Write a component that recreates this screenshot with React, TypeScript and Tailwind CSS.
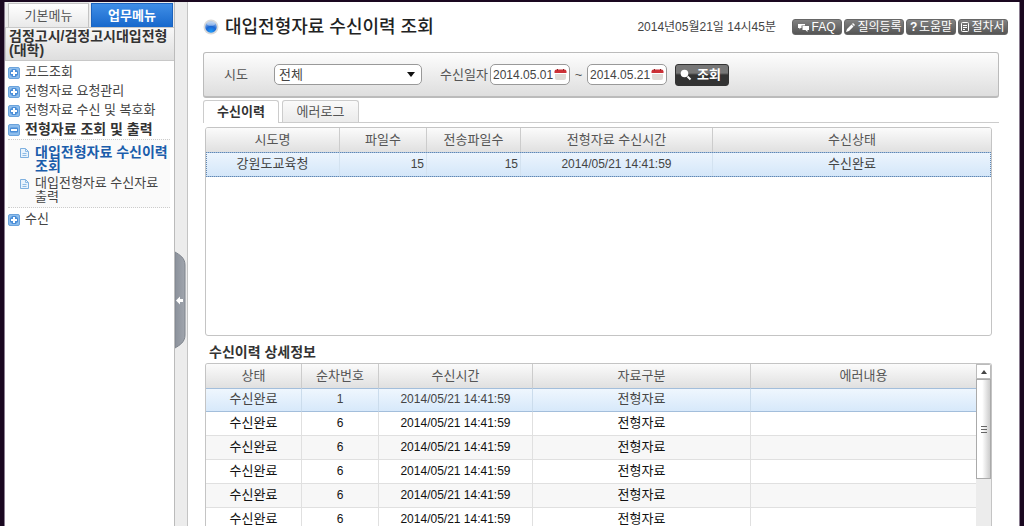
import React from "react";

const fonts = "[font-family:'Liberation_Sans','Noto_Sans_CJK_KR',sans-serif]";

type Row = { status: string; seq: number; time: string; kind: string; error: string };

const detailRows: Row[] = [1, 6, 6, 6, 6, 6].map((seq) => ({
  status: "수신완료",
  seq,
  time: "2014/05/21 14:41:59",
  kind: "전형자료",
  error: "",
}));

function TreeIcon({ open = false }: { open?: boolean }) {
  return (
    <svg viewBox="0 0 12 12" className="h-3 w-3 shrink-0" aria-hidden="true">
      <rect x="0.5" y="0.5" width="11" height="11" rx="1.5" fill="#8ebdec" stroke="#6ba3dc" />
      <rect x="2" y="3.500" width="8" height="5" rx="1" fill="#4a8ed8" />
      {!open && <rect x="3.500" y="2" width="5" height="8" rx="1" fill="#4a8ed8" />}
      <path d={open ? "M3 6h6" : "M3 6h6M6 3v6"} stroke="#fff" strokeWidth="2" />
    </svg>
  );
}

function PageIcon() {
  return (
    <svg viewBox="0 0 9 10" className="mt-[3px] h-[10px] w-[9px] shrink-0" aria-hidden="true">
      <path d="M0.5 0.5h5l3 3v6h-8z" fill="#e9f3fc" stroke="#7fb0df" />
      <path d="M5.5 0.5v3h3M2.5 5.5h4M2.5 7.5h4" fill="none" stroke="#8dbbe6" />
    </svg>
  );
}

function TreeItem({ label, open = false }: { label: string; open?: boolean }) {
  return (
    <a
      href="#"
      aria-expanded={open}
      className={
        open
          ? "flex h-[19px] items-center gap-[5px] pl-[3px] text-[14px] font-bold text-[#333]"
          : "flex h-[19px] items-center gap-[5px] pl-[3px] text-[13px] text-[#444]"
      }
    >
      <TreeIcon open={open} />
      <span className="pb-px whitespace-nowrap">{label}</span>
    </a>
  );
}

function Sidebar() {
  return (
    <aside className="flex w-[170px] shrink-0 flex-col border-r border-[#bbb] bg-white">
      <div className="flex h-[25px] gap-[2px] bg-[#ececec] pt-px pl-[3px] text-[13px]">
        <button className="w-[81px] border border-b-0 border-[#c4c4c4] bg-linear-to-b from-white to-[#e9e9e9] text-[#555]">
          기본메뉴
        </button>
        <button className="w-[82px] border border-b-0 border-[#1c63bd] bg-linear-to-b from-[#3f8ee6] to-[#1668cc] font-bold text-white">
          업무메뉴
        </button>
      </div>
      <h2 className="flex h-[34px] items-start border border-r-0 border-[#c8c8c8] bg-linear-to-b from-[#f8f8f8] to-[#dedede] pt-px pl-[3px] text-[14px] leading-[14px] font-bold text-[#333]">
        <span className="whitespace-nowrap">
          검정고시/검정고시대입전형
          <br />
          (대학)
        </span>
      </h2>
      <nav className="pt-[2px]" aria-label="업무메뉴">
        <TreeItem label="코드조회" />
        <TreeItem label="전형자료 요청관리" />
        <TreeItem label="전형자료 수신 및 복호화" />
        <TreeItem label="전형자료 조회 및 출력" open />
        <ul className="mr-1 mb-[2px] ml-[3px] flex flex-col gap-[3px] border-y border-dotted border-[#ccc] bg-[#fafafa] pt-[5px] pb-[3px] text-[#444]">
          <li>
            <a href="#" className="flex gap-[6px] pl-3 text-[14px] leading-[14px] font-bold whitespace-nowrap text-[#1b5dab]">
              <PageIcon />
              <span>
                대입전형자료 수신이력
                <br />
                조회
              </span>
            </a>
          </li>
          <li>
            <a href="#" className="flex gap-[6px] pl-3 text-[13px] leading-[14px] whitespace-nowrap">
              <PageIcon />
              <span>
                대입전형자료 수신자료
                <br />
                출력
              </span>
            </a>
          </li>
        </ul>
        <TreeItem label="수신" />
      </nav>
    </aside>
  );
}

function Gutter() {
  return (
    <div className="flex w-[13px] shrink-0 flex-col border-r border-[#c4c4c4] bg-[#ececec] pt-[249px]">
      <button aria-label="메뉴 접기" className="h-[98px] w-[11px]">
        <svg viewBox="0 0 11 98" className="h-[98px] w-[11px]" aria-hidden="true">
          <defs>
            <linearGradient id="handle">
              <stop offset="0" stopColor="#8b919b" />
              <stop offset="1" stopColor="#a0a5ad" />
            </linearGradient>
          </defs>
          <path d="M0 1C5 4 10 7 10 14V84C10 91 5 94 0 97Z" fill="url(#handle)" stroke="#7e848d" />
          <path d="M1 49.500l4-4v2.500h3v3h-3v2.500z" fill="#fff" />
        </svg>
      </button>
    </div>
  );
}

function ToolButton({ icon, label, className }: { icon: React.ReactNode; label: string; className: string }) {
  return (
    <button
      className={`flex h-4 items-center justify-center gap-[2px] rounded-[3px] border border-[#666] bg-linear-to-b from-[#828282] to-[#555] text-[12px] leading-3 whitespace-nowrap text-white ${className}`}
    >
      {icon}
      {label}
    </button>
  );
}

function DateField({ id, label, value }: { id: string; label: string; value: string }) {
  return (
    <span className="flex h-[21px] w-20 items-center rounded-[5px] border border-[#999] bg-white px-[2px]">
      <input id={id} aria-label={label} defaultValue={value} className="h-4 w-0 flex-1 text-[12px] text-[#444] outline-none" />
      <button aria-label="달력 열기">
        <svg viewBox="0 0 13 13" className="h-[13px] w-[13px]" aria-hidden="true">
          <path d="M1 5h11v5q0 2-2 2H3q-2 0-2-2z" fill="#e0dcd8" />
          <path d="M0.5 5V3.500q0-2 2-2h8q2 0 2 2V5z" fill="#cc3238" />
          <path d="M3.500 1v1.500M9.500 1v1.500" stroke="#8d1f22" />
          <path d="M1 5.500h11" stroke="#fff" />
        </svg>
      </button>
    </span>
  );
}

function Filters() {
  return (
    <form
      onSubmit={(e) => e.preventDefault()}
      className="flex h-[46px] shrink-0 items-center rounded-[3px] border border-b-2 border-[#bbb] bg-linear-to-b from-[#fdfdfd] to-[#dedede] pl-5 text-[13px] text-[#555]"
    >
      <label htmlFor="region" className="w-[50px]">
        시도
      </label>
      <span className="grid w-[148px] items-center">
        <select
          id="region"
          className="col-start-1 row-start-1 h-[21px] appearance-none rounded-[5px] border border-[#999] bg-white pl-1 text-[13px] leading-4 text-[#444]"
        >
          <option>전체</option>
        </select>
        <svg viewBox="0 0 8 5" className="pointer-events-none col-start-1 row-start-1 mr-[7px] h-[5px] w-2 justify-self-end" aria-hidden="true">
          <path d="M0 0h8L4 5z" fill="#111" />
        </svg>
      </span>
      <label htmlFor="from" className="ml-[18px] w-[50px]">
        수신일자
      </label>
      <DateField id="from" label="수신 시작일" value="2014.05.01" />
      <span className="w-[17px] text-center">~</span>
      <DateField id="to" label="수신 종료일" value="2014.05.21" />
      <button className="ml-2 flex h-[22px] w-[54px] items-center gap-[5px] rounded-[3px] border border-[#333] bg-linear-to-b from-[#777] from-40% to-[#333] to-50% pl-1 font-bold text-white">
        <svg viewBox="0 0 12 12" className="h-3 w-3" aria-hidden="true">
          <circle cx="4.500" cy="4.500" r="3.800" fill="#fff" />
          <path d="M7.500 7.500l3 3" stroke="#fff" strokeWidth="2" />
        </svg>
        조회
      </button>
    </form>
  );
}

const headCell = "border-r border-[#ccc] p-0 pb-px text-center font-normal last:border-r-0";
const headRow = "h-6 bg-linear-to-b from-[#fbfbfb] to-[#e0e0e0] text-[#555]";
const historyCell = "border-y border-r border-y-[#a3bedb] border-r-[#d3e2f0] p-0 pb-[2px] last:border-r-0";

function HistoryTable() {
  return (
    <div className="mt-1 mr-[7px] ml-[2px] h-[209px] shrink-0 overflow-hidden rounded-[3px] border border-[#c4c4c4]">
      <table className="w-full table-fixed border-separate border-spacing-0 text-[13px]">
        <colgroup>
          <col className="w-[134px]" />
          <col className="w-[87px]" />
          <col className="w-[94px]" />
          <col className="w-[192px]" />
          <col />
        </colgroup>
        <thead>
          <tr className={headRow}>
            {["시도명", "파일수", "전송파일수", "전형자료 수신시간", "수신상태"].map((h) => (
              <th key={h} className={headCell}>
                {h}
              </th>
            ))}
          </tr>
        </thead>
        <tbody>
          <tr className="h-[25px] bg-linear-to-b from-[#edf5fd] to-[#d3e6f9] text-center text-[#444] outline-1 -outline-offset-1 outline-dotted outline-[#5f87b5]">
            <td className={historyCell}>강원도교육청</td>
            <td className={`${historyCell} pr-[2px] text-right text-[12px]`}>15</td>
            <td className={`${historyCell} pr-[2px] text-right text-[12px]`}>15</td>
            <td className={`${historyCell} text-[12px]`}>2014/05/21 14:41:59</td>
            <td className={historyCell}>수신완료</td>
          </tr>
        </tbody>
      </table>
    </div>
  );
}

function DetailTable() {
  return (
    <div className="mr-[7px] ml-[2px] flex min-h-0 flex-1 items-stretch overflow-hidden rounded-t-[3px] border border-b-0 border-[#c4c4c4]">
      <div className="min-w-0 flex-1 overflow-hidden">
        <table className="w-full table-fixed border-separate border-spacing-0 text-[13px]">
          <colgroup>
            <col className="w-24" />
            <col className="w-[77px]" />
            <col className="w-[154px]" />
            <col className="w-[218px]" />
            <col />
          </colgroup>
          <thead>
            <tr className={headRow}>
              {["상태", "순차번호", "수신시간", "자료구분", "에러내용"].map((h) => (
                <th key={h} className={headCell}>
                  {h}
                </th>
              ))}
            </tr>
          </thead>
          <tbody className="text-center">
            {detailRows.map((r, i) => {
              const cell =
                i === 0
                  ? "border-y border-r border-y-[#a3bedb] border-r-[#cbdcec] p-0 pb-[2px] last:border-r-0"
                  : "border-r border-b border-[#e0e0e0] p-0 pb-[2px] last:border-r-0";
              return (
                <tr
                  key={i}
                  className={
                    i === 0
                      ? "h-6 bg-linear-to-b from-[#f0f7fe] to-[#d6e8fa] text-[#444]"
                      : i % 2 === 0
                        ? "h-6 bg-[#f7f7f7] text-[#111]"
                        : "h-6 bg-white text-[#111]"
                  }
                >
                  <td className={cell}>{r.status}</td>
                  <td className={`${cell} text-[12px]`}>{r.seq}</td>
                  <td className={`${cell} text-[12px]`}>{r.time}</td>
                  <td className={cell}>{r.kind}</td>
                  <td className={cell}>{r.error}</td>
                </tr>
              );
            })}
          </tbody>
        </table>
      </div>
      <div className="w-[15px] shrink-0 bg-[#ececec]">
        <button aria-label="위로" className="flex h-[15px] w-full items-center justify-center border border-[#bbb] bg-white">
          <svg viewBox="0 0 6 4" className="h-1 w-[6px]" aria-hidden="true">
            <path d="M0 4L3 0l3 4z" fill="#444" />
          </svg>
        </button>
        <div className="flex h-[100px] flex-col items-center justify-center gap-[2px] border border-[#aaa] bg-linear-to-r from-white from-40% to-[#ccc]">
          <span className="h-px w-[6px] bg-[#666]" />
          <span className="h-px w-[6px] bg-[#666]" />
          <span className="h-px w-[6px] bg-[#666]" />
        </div>
      </div>
    </div>
  );
}

export default function App() {
  return (
    <div
      className={`flex h-screen overflow-hidden border-t-2 border-r-4 border-l-4 border-[#1a0820] bg-white leading-4 ${fonts}`}
    >
      <div className="flex min-w-0 flex-1 border-x border-[#8a7d90]">
        <Sidebar />
        <Gutter />
        <main className="flex min-w-0 flex-1 flex-col pr-5 pl-[15px]">
          <header className="-mr-[9px] flex h-[50px] shrink-0 items-center">
            <h1 className="flex items-center gap-[6px] text-[18px] leading-6 font-medium whitespace-nowrap text-[#222]">
              <svg viewBox="0 0 16 16" className="h-4 w-4" aria-hidden="true">
                <defs>
                  <radialGradient id="ball" cx="0.5" cy="0.9" r="0.9">
                    <stop offset="0" stopColor="#1c9bfa" />
                    <stop offset="0.5" stopColor="#1c66d2" />
                    <stop offset="1" stopColor="#a9c8ee" />
                  </radialGradient>
                </defs>
                <circle cx="8" cy="8" r="7.500" fill="#d9d9d9" />
                <circle cx="8" cy="8" r="5.800" fill="url(#ball)" />
                <ellipse cx="8" cy="4.800" rx="4" ry="2" fill="#fff" opacity="0.4" />
              </svg>
              대입전형자료 수신이력 조회
            </h1>
            <time className="ml-auto text-[12px] whitespace-nowrap text-[#444]">2014년05월21일 14시45분</time>
            <div className="ml-4 flex gap-[2px]">
              <ToolButton
                className="w-[50px]"
                label="FAQ"
                icon={
                  <svg viewBox="0 0 11 9" className="h-[9px] w-[11px]" aria-hidden="true">
                    <path d="M0 1h7v1.500H3.500V5H2.500L1.500 6.500V5H0z" fill="#fff" />
                    <path d="M4.500 3H11v4H9.500v2L7.500 7h-3z" fill="#fff" />
                  </svg>
                }
              />
              <ToolButton
                className="w-[60px]"
                label="질의등록"
                icon={
                  <svg viewBox="0 0 9 9" className="h-[9px] w-[9px]" aria-hidden="true">
                    <path d="M0 9l1-3 4.500-4.500 2 2L3 8zM6 1l1-1 2 2-1 1z" fill="#fff" />
                  </svg>
                }
              />
              <ToolButton
                className="w-[50px]"
                label="도움말"
                icon={<span className="w-[7px] font-bold">?</span>}
              />
              <ToolButton
                className="w-[50px]"
                label="절차서"
                icon={
                  <svg viewBox="0 0 8 10" className="h-[10px] w-2" aria-hidden="true">
                    <rect x="0.5" y="0.5" width="7" height="9" rx="1" fill="none" stroke="#fff" />
                    <path d="M2 3.500h4M2 5.500h4M2 7.500h2" stroke="#fff" />
                  </svg>
                }
              />
            </div>
          </header>
          <Filters />
          <div className="mt-[2px] flex h-[23px] shrink-0 gap-[3px] border-b border-[#ccc] text-[13px]" role="tablist">
            <button
              role="tab"
              aria-selected="true"
              className="-mb-px w-[76px] rounded-t-[3px] border border-b-0 border-[#ccc] bg-white font-bold text-[#333]"
            >
              수신이력
            </button>
            <button
              role="tab"
              aria-selected="false"
              className="w-[77px] rounded-t-[3px] border border-b-0 border-[#ccc] bg-linear-to-b from-[#fafafa] to-[#ebebeb] text-[#555]"
            >
              에러로그
            </button>
          </div>
          <HistoryTable />
          <h2 className="flex h-[27px] shrink-0 items-center pt-1 pl-[6px] text-[14px] font-bold text-[#333]">
            수신이력 상세정보
          </h2>
          <DetailTable />
        </main>
      </div>
    </div>
  );
}
